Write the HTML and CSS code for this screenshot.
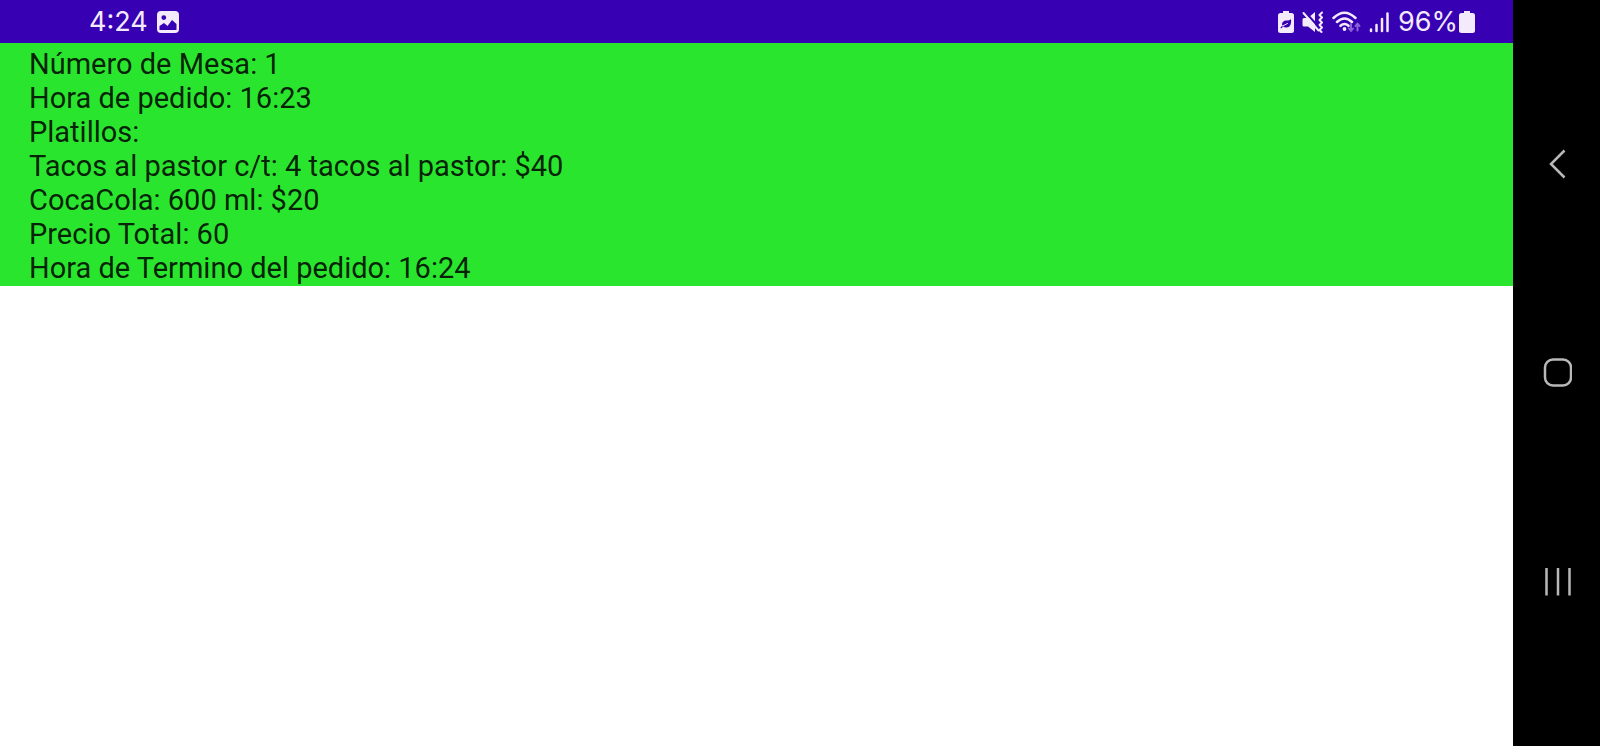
FILE: index.html
```html
<!DOCTYPE html>
<html lang="es">
<head>
<meta charset="utf-8">
<meta name="viewport" content="width=device-width, initial-scale=1">
<title>Pedido</title>
<link rel="stylesheet" href="styles.css">
</head>
<body>
<div class="device">
  <div class="screen">
    <header class="status">
      <div class="status-left">
        <time class="status-text">4:24</time>
        <svg class="icon" width="22" height="22" viewBox="0 0 22 22" aria-hidden="true">
          <path fill-rule="evenodd" fill="currentColor" d="M4 0H18Q22 0 22 4V18Q22 22 18 22H4Q0 22 0 18V4Q0 0 4 0ZM6.800 4.200A2.400 2.400 0 1 0 6.800 9A2.400 2.400 0 1 0 6.800 4.200ZM2.500 15V19H19.500V13L15 9L10.500 15L7 12Z"/>
        </svg>
      </div>
      <div class="status-right">
        <svg class="icon" width="16" height="22" viewBox="0 0 16 22" aria-hidden="true">
          <path fill="currentColor" d="M5 0H11V2H13.500Q16 2 16 4.500V19.500Q16 22 13.500 22H2.500Q0 22 0 19.500V4.500Q0 2 2.500 2H5Z"/>
          <path class="cut" d="M13 8C13.500 13 12 16.500 8.500 16.500C7 16.500 6 16 5.500 15.500L3 17.500L2.500 16.500L4.500 14.500C3 11.500 6 9.500 8.500 9.500C10.500 9.500 12 9 13 8Z"/>
          <path class="leaf-vein" d="M4.500 15L9.500 12.500"/>
        </svg>
        <svg class="icon" width="22" height="22" viewBox="0 0 22 22" aria-hidden="true">
          <path fill="currentColor" d="M2 7H6L13 1V21L6 15.500H2Q0.500 15.500 0.500 14V8.500Q0.500 7 2 7Z"/>
          <path class="line" d="M20 1.500L17.500 4L20 6.500L17.500 9L20 11.500L17.500 14L20 16.500L17.500 19L19.500 21"/>
          <path class="gap" d="M3.500 1.500L15.500 14.500"/>
          <path class="line" d="M1.500 2L16.500 19.500"/>
        </svg>
        <svg class="icon" width="29" height="22" viewBox="0 0 29 22" aria-hidden="true">
          <path class="arc" d="M1.500 7Q12.500 -3.500 23.500 7M5 11Q12.500 4 20 11M8.500 14.800Q12.500 11.200 16.500 14.800"/>
          <circle fill="currentColor" cx="12.500" cy="18" r="1.900"/>
          <path class="faint" d="M19 13V19.500M17 17.500L19 20L21 17.500M25.500 19.500V13M23.500 15L25.500 12.500L27.500 15"/>
        </svg>
        <svg class="icon" width="21" height="22" viewBox="0 0 21 22" aria-hidden="true">
          <path class="bars" d="M2 18.500V20M7.500 14V20M13 8V20M18.500 2.500V20"/>
        </svg>
        <div class="battery">
          <span class="status-text">96%</span>
          <svg class="icon" width="16" height="22" viewBox="0 0 16 22" aria-hidden="true">
            <path fill="currentColor" d="M5 0H11V2H13.500Q16 2 16 4.500V19.500Q16 22 13.500 22H2.500Q0 22 0 19.500V4.500Q0 2 2.500 2H5Z"/>
          </svg>
        </div>
      </div>
    </header>
    <main class="order">
      <p>Número de Mesa: 1</p>
      <p>Hora de pedido: 16:23</p>
      <p>Platillos:</p>
      <p>Tacos al pastor c/t: 4 tacos al pastor: $40</p>
      <p>CocaCola: 600 ml: $20</p>
      <p>Precio Total: 60</p>
      <p>Hora de Termino del pedido: 16:24</p>
    </main>
  </div>
  <nav class="nav" aria-label="Sistema">
    <button class="nav-button" type="button" aria-label="Atrás">
      <svg width="30" height="30" viewBox="0 0 30 30" aria-hidden="true"><path d="M22.500 1.500L9 15L22.500 28.500"/></svg>
    </button>
    <button class="nav-button" type="button" aria-label="Inicio">
      <svg width="30" height="30" viewBox="0 0 30 30" aria-hidden="true"><rect x="3" y="1.500" width="26" height="26" rx="8"/></svg>
    </button>
    <button class="nav-button" type="button" aria-label="Recientes">
      <svg width="30" height="30" viewBox="0 0 30 30" aria-hidden="true"><path d="M4.500 1V28.500M16 1V28.500M27.500 1V28.500"/></svg>
    </button>
  </nav>
</div>
</body>
</html>
```
FILE: styles.css
```css
body {
  margin: 0;
  background: #fff;
  font-family: Roboto, "Noto Sans", sans-serif;
}

.device {
  display: flex;
  min-height: 100vh;
}

.screen {
  flex: 1;
}

.status {
  display: flex;
  justify-content: space-between;
  align-items: center;
  height: 43px;
  padding: 0 38px 0 89px;
  background: #3700b3;
  color: #f3eafc;
}

.status-left,
.status-right,
.battery {
  display: flex;
  align-items: center;
}

.status-left {
  gap: 9px;
}

.status-right {
  gap: 8px;
}

.battery {
  gap: 1px;
}

.status-text {
  font-family: Inter, Roboto, sans-serif;
  font-size: 27px;
  line-height: 43px;
}

.icon {
  display: block;
}

.icon path {
  stroke-linecap: round;
  stroke-linejoin: round;
}

.cut {
  fill: #3700b3;
}

.leaf-vein {
  fill: none;
  stroke: #f3eafc;
  stroke-width: 1;
}

.line,
.arc,
.bars {
  fill: none;
  stroke: currentColor;
  stroke-width: 2;
}

.arc,
.bars {
  stroke-width: 2.5;
}

.gap {
  fill: none;
  stroke: #3700b3;
  stroke-width: 2;
}

.faint {
  fill: none;
  stroke: #8a63d6;
  stroke-width: 2;
}

.order {
  padding: 4px 29px 1px;
  background: #29e52d;
  color: rgba(0, 0, 0, 0.87);
  font-size: 29px;
  line-height: 34px;
}

.order p {
  margin: 0;
}

.nav {
  display: grid;
  grid-template-rows: repeat(3, 28%);
  align-content: center;
  width: 87px;
  background: #000;
}

.nav-button {
  display: flex;
  align-items: center;
  justify-content: center;
  padding: 0;
  border: 0;
  background: none;
  color: #b8b8b8;
}

.nav-button svg {
  fill: none;
  stroke: currentColor;
  stroke-width: 2.5;
}
```
